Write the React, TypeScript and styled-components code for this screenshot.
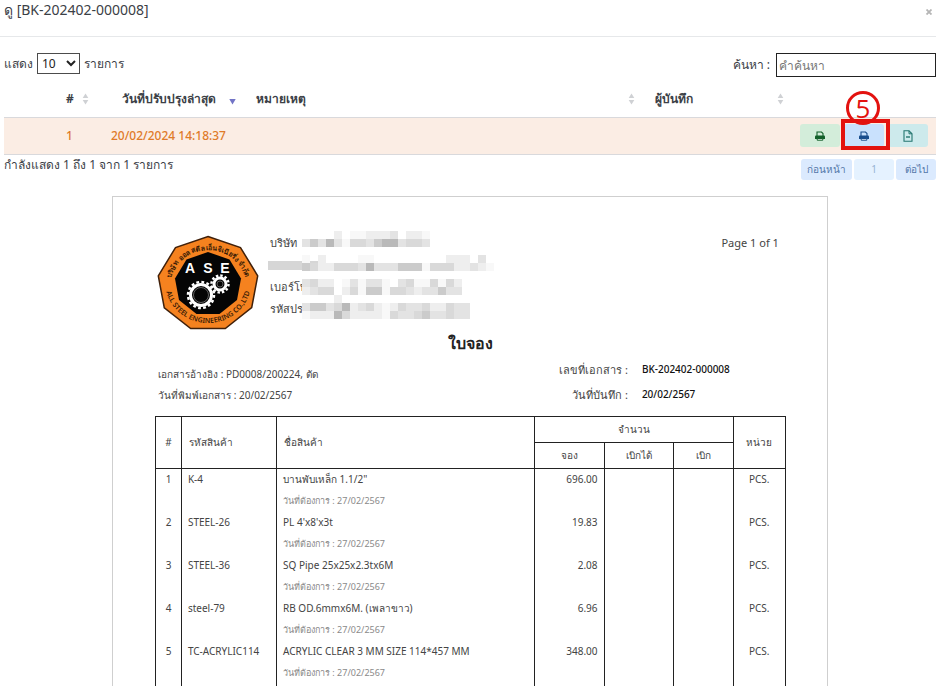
import React from 'react';
import styled, { createGlobalStyle, css } from 'styled-components';

const GlobalStyle = createGlobalStyle`
  *, *::before, *::after { box-sizing: border-box; }
  body {
    margin: 0;
    background: #fff;
    color: #3b4046;
    font: 12px/18px 'Noto Sans', sans-serif;
  }
  button, input, select { font: inherit; color: inherit; }
`;

const Page = styled.main`
  height: 100vh;
  overflow: hidden;
`;

/* ---------- dialog header ---------- */

const DialogHeader = styled.header`
  display: flex;
  justify-content: space-between;
  align-items: flex-start;
  height: 37px;
  padding-left: 4px;
  border-bottom: 1px solid #e6e8ea;
`;

const DialogTitle = styled.h1`
  margin: 0;
  font-size: 14px;
  font-weight: 400;
  line-height: 20px;
`;

const CloseButton = styled.button`
  display: flex;
  padding: 9px 4px;
  border: 0;
  background: none;
`;

/* ---------- list controls ---------- */

const DialogBody = styled.section`
  padding: 16px 0 0 4px;
`;

const Controls = styled.div`
  display: flex;
  justify-content: space-between;
  align-items: flex-start;
  height: 29px;
`;

const LengthLabel = styled.label`
  display: flex;
  align-items: center;
  gap: 4px;
  height: 21px;
`;

const LengthSelect = styled.select`
  width: 43px;
  height: 21px;
  padding: 0;
  border: 1px solid #4c4c4c;
  border-radius: 0;
  background: #fff;
  color: #222;
`;

const SearchLabel = styled.label`
  display: flex;
  align-items: center;
  gap: 6px;
`;

const SearchInput = styled.input`
  width: 160px;
  height: 24px;
  padding: 0 2px;
  border: 1px solid #222;
  border-radius: 0;
  &::placeholder { color: #777; opacity: 1; }
`;

/* ---------- revision list ---------- */

const ListTable = styled.table`
  width: 100%;
  border-collapse: collapse;
  table-layout: fixed;
`;

const Col = styled.col<{ $w?: string }>`
  width: ${(p) => p.$w ?? 'auto'};
`;

const ListHead = styled.th`
  height: 35px;
  padding: 0 10px;
  border-bottom: 1px solid #d9d9dc;
  font-weight: 700;
  text-align: left;
`;

const HeadContent = styled.div<{ $center?: boolean }>`
  display: flex;
  align-items: center;
  justify-content: space-between;
  & > span { flex: 1; text-align: ${(p) => (p.$center ? 'center' : 'left')}; }
`;

const ListCell = styled.td`
  height: 37px;
  padding: 0 18px 0 10px;
  border-bottom: 1px solid #d9d9dc;
  background: #fbede4;
  color: #df7b29;
  font-weight: 500;
  text-align: center;
`;

const ActionCell = styled(ListCell)`
  padding: 0 8px 0 0;
`;

const Actions = styled.div`
  display: flex;
  justify-content: flex-end;
  gap: 4px;
`;

const ActionSlot = styled.div`
  position: relative;
`;

const tones = {
  green: css`background: #d3edda; color: #13602a;`,
  blue: css`background: #c9e1fd; color: #174c8c;`,
  teal: css`background: #cdeaec; color: #24766f;`,
};

const ActionButton = styled.button<{ $tone: keyof typeof tones }>`
  display: flex;
  align-items: center;
  justify-content: center;
  width: 40px;
  height: 23px;
  padding: 0;
  border: 0;
  border-radius: 3px;
  ${(p) => tones[p.$tone]}
`;

const StepNumber = styled.div`
  position: absolute;
  left: 2px;
  bottom: 22px;
  display: flex;
  align-items: center;
  justify-content: center;
  width: 34px;
  height: 34px;
  border: 3px solid #e3120f;
  border-radius: 50%;
  color: #e3120f;
  font: 26px/28px 'Open Sans', sans-serif;
`;

const StepFrame = styled.div`
  position: absolute;
  inset: -5px -6px -3px -3px;
  border: 4px solid #e3120f;
  pointer-events: none;
`;

const ListFooter = styled.div`
  display: flex;
  justify-content: space-between;
  align-items: flex-start;
  height: 41px;
  line-height: 20px;
`;

const Pager = styled.nav`
  display: flex;
  gap: 2px;
  padding-top: 4px;
`;

const PageButton = styled.button<{ $current?: boolean }>`
  min-width: 40px;
  height: 21px;
  padding: 0 6px;
  border: 0;
  border-radius: 3px;
  background: ${(p) => (p.$current ? '#e5f2ff' : '#dbeafe')};
  color: ${(p) => (p.$current ? '#95b3d3' : '#5377a8')};
  font-size: 10px;
`;

/* ---------- printed document ---------- */

const Paper = styled.article`
  width: 76.8%;
  min-width: 640px;
  margin: 0 auto;
  padding: 34px 41px 0 42px;
  border: 1px solid #cfcfcf;
  color: #444;
  font-size: 10px;
`;

const Letterhead = styled.div`
  display: flex;
  align-items: flex-start;
  gap: 11px;
  height: 100px;
  padding: 0 7px 0 2px;
`;

const LogoSlot = styled.div`
  padding-top: 4px;
`;

const Company = styled.div`
  position: relative;
  flex: 1;
  font-size: 11px;
  line-height: 23px;
`;

const CompanyLine = styled.div`
  height: 22px;
`;

const Redaction = styled.svg`
  position: absolute;
  left: -2px;
  top: 0;
`;

const PageCount = styled.div`
  font-size: 11px;
  line-height: 23px;
`;

const DocTitle = styled.h2`
  margin: 0;
  color: #222;
  font-size: 16px;
  font-weight: 600;
  line-height: 24px;
  text-align: center;
`;

const References = styled.div`
  display: flex;
  justify-content: space-between;
  height: 61px;
  padding: 2px 0 0 3px;
`;

const SourceLines = styled.div`
  padding-top: 7px;
  line-height: 21px;
`;

const Facts = styled.dl`
  display: grid;
  grid-template-columns: 100px 144px;
  column-gap: 14px;
  align-content: start;
  margin: 0;
  line-height: 25px;
  & > dt { font-size: 11px; text-align: right; }
  & > dd { margin: 0; color: #111; font-weight: 500; }
`;

const ItemTable = styled.table`
  width: 100%;
  border: 1px solid #222;
  border-collapse: collapse;
  table-layout: fixed;
`;

const ItemHead = styled.th<{ $left?: boolean }>`
  height: 26px;
  padding: 0 7px;
  border: 1px solid #222;
  font-weight: 400;
  line-height: 20px;
  text-align: ${(p) => (p.$left ? 'left' : 'center')};
`;

const ItemCell = styled.td<{ $align?: 'left' | 'right' | 'center' }>`
  height: 43px;
  padding: 0 6px;
  border: solid #222;
  border-width: 0 1px;
  line-height: 20px;
  text-align: ${(p) => p.$align ?? 'left'};
  vertical-align: top;
  white-space: nowrap;
`;

const NeededBy = styled.div`
  color: #8a8a8a;
  font-size: 9px;
  line-height: 23px;
`;

/* ---------- drawings ---------- */

function SortMark({ active = false }: { active?: boolean }) {
  return (
    <svg width="7" height="12" viewBox="0 0 7 12" aria-hidden="true">
      {!active && <path d="M3.5 0.5 6.3 5H.7Z" fill="#cfd1d4" />}
      {active ? <path d="M.3 6h6.400L3.500 11.500Z" fill="#7274c6" /> : <path d="M.7 7h5.600L3.500 11.500Z" fill="#cfd1d4" />}
    </svg>
  );
}

function PrintIcon() {
  return (
    <svg width="10" height="10" viewBox="0 0 10 10" aria-hidden="true">
      <path d="M2 5V1h4.500L8 2.500V5" fill="none" stroke="currentColor" strokeWidth="1.100" />
      <path d="M0 5.500Q0 4.500 1 4.500h8q1 0 1 1V8H0Z" fill="currentColor" />
      <path d="M2.200 7.500h5.600v1.700H2.200Z" fill="#fff" fillOpacity=".85" stroke="currentColor" strokeWidth="1" />
    </svg>
  );
}

function FileIcon() {
  return (
    <svg width="10" height="12" viewBox="0 0 10 12" fill="none" stroke="currentColor" aria-hidden="true">
      <path d="M1 .8h5L9 3.800v7.400H1Z" strokeWidth="1.100" />
      <path d="M6 .8v3h3" strokeWidth="1" />
      <path d="M3 7h4" strokeWidth="1.400" />
    </svg>
  );
}

const LOGO_X = 51;
const LOGO_Y = 49;

function nonagon(rx: number, ry: number) {
  return Array.from({ length: 9 }, (_, i) => {
    const a = (i * 2 * Math.PI) / 9;
    return `${(LOGO_X + rx * Math.sin(a)).toFixed(1)},${(LOGO_Y - ry * Math.cos(a)).toFixed(1)}`;
  }).join(' ');
}

function Gear({ x, y, r, teeth }: { x: number; y: number; r: number; teeth: number }) {
  const pitch = (2 * Math.PI * r) / teeth;
  return (
    <g fill="none" stroke="#fff">
      <circle cx={x} cy={y} r={r} strokeWidth="2.500" strokeDasharray={`${pitch * 0.55} ${pitch * 0.45}`} />
      <circle cx={x} cy={y} r={r - 2.5} strokeWidth="3" />
      <circle cx={x} cy={y} r={r - 5.5} stroke="#777" strokeWidth="0.800" />
    </g>
  );
}

function Logo() {
  return (
    <svg width="102" height="98" viewBox="0 0 102 98" role="img" aria-label="ASE">
      <polygon points={nonagon(50.5, 47.5)} fill="#f5821f" stroke="#40200a" strokeWidth="1.500" />
      <polygon points={nonagon(33.5, 32)} fill="#050505" />
      <g fill="#fff" fontFamily="Liberation Sans, sans-serif" fontSize="14" fontWeight="700" textAnchor="middle">
        <text x="33" y="38">A</text>
        <text x="51" y="38">S</text>
        <text x="68" y="38">E</text>
      </g>
      <Gear x={44} y={60} r={13} teeth={16} />
      <Gear x={63} y={49} r={8.5} teeth={12} />
      <path id="arc-top" d="M13 51A38 36 0 0 1 89 51" fill="none" />
      <path id="arc-bottom" d="M8 47A43 41 0 0 0 94 47" fill="none" />
      <g fill="#3a1c06" fontFamily="Noto Sans, sans-serif" fontSize="7" fontWeight="600" textAnchor="middle">
        <text>
          <textPath href="#arc-top" startOffset="50%">บริษัท ออล สตีล เอ็นจิเนียริ่ง จำกัด</textPath>
        </text>
        <text>
          <textPath href="#arc-bottom" startOffset="50%">ALL STEEL ENGINEERING CO.,LTD</textPath>
        </text>
      </g>
    </svg>
  );
}

const SHADES = ['', '#f8f8f8', '#eeeeee', '#e3e3e3', '#d9d9d9', '#cbcbcb', '#b9b9b9'];
const MASK = [
  '000020112223022100000000',
  '353631443566344300000000',
  '000000000000000000000000',
  '102000011000000000222030',
  '542244436333555144422321',
  '000000000000000000000000',
  '342201313310341141420000',
  '234402415514432335330000',
  '000020000000000000000000',
  '355346234212433422433000',
  '122264222214334533433000',
];

function CompanyMask() {
  return (
    <Redaction width="228" height="90" viewBox="0 0 228 90" aria-hidden="true" shapeRendering="crispEdges">
      <rect x="0" y="30" width="50" height="9" fill="#d6d6d6" />
      {MASK.flatMap((row, y) =>
        [...row].map((level, x) =>
          level === '0' ? null : (
            <rect key={`${x}-${y}`} x={34 + x * 8} y={y * 8} width="8" height="8" fill={SHADES[Number(level)]} />
          ),
        ),
      )}
    </Redaction>
  );
}

/* ---------- data ---------- */

const items = [
  { code: 'K-4', name: 'บานพับเหล็ก 1.1/2"', qty: '696.00' },
  { code: 'STEEL-26', name: "PL 4'x8'x3t", qty: '19.83' },
  { code: 'STEEL-36', name: 'SQ Pipe 25x25x2.3tx6M', qty: '2.08' },
  { code: 'steel-79', name: 'RB OD.6mmx6M. (เพลาขาว)', qty: '6.96' },
  { code: 'TC-ACRYLIC114', name: 'ACRYLIC CLEAR 3 MM SIZE 114*457 MM', qty: '348.00' },
];

export default function App() {
  return (
    <>
      <GlobalStyle />
      <Page>
        <DialogHeader>
          <DialogTitle>ดู [BK-202402-000008]</DialogTitle>
          <CloseButton type="button" aria-label="ปิด">
            <svg width="6" height="6" viewBox="0 0 6 6" stroke="#b5b5b5" strokeWidth="1.800" aria-hidden="true">
              <path d="M.5.5l5 5M5.500.5l-5 5" />
            </svg>
          </CloseButton>
        </DialogHeader>

        <DialogBody>
          <Controls>
            <LengthLabel>
              แสดง
              <LengthSelect defaultValue="10">
                <option>10</option>
                <option>25</option>
                <option>50</option>
              </LengthSelect>
              รายการ
            </LengthLabel>
            <SearchLabel>
              ค้นหา :
              <SearchInput type="search" placeholder="คำค้นหา" />
            </SearchLabel>
          </Controls>

          <ListTable>
            <colgroup>
              <Col $w="44px" />
              <Col $w="51px" />
              <Col $w="147px" />
              <Col />
              <Col $w="149px" />
              <Col $w="142px" />
            </colgroup>
            <thead>
              <tr>
                <ListHead />
                <ListHead>
                  <HeadContent $center><span>#</span><SortMark /></HeadContent>
                </ListHead>
                <ListHead>
                  <HeadContent $center><span>วันที่ปรับปรุงล่าสุด</span><SortMark active /></HeadContent>
                </ListHead>
                <ListHead>
                  <HeadContent><span>หมายเหตุ</span><SortMark /></HeadContent>
                </ListHead>
                <ListHead>
                  <HeadContent><span>ผู้บันทึก</span><SortMark /></HeadContent>
                </ListHead>
                <ListHead />
              </tr>
            </thead>
            <tbody>
              <tr>
                <ListCell />
                <ListCell>1</ListCell>
                <ListCell>20/02/2024 14:18:37</ListCell>
                <ListCell />
                <ListCell />
                <ActionCell>
                  <Actions>
                    <ActionButton type="button" $tone="green" aria-label="พิมพ์"><PrintIcon /></ActionButton>
                    <ActionSlot>
                      <ActionButton type="button" $tone="blue" aria-label="พิมพ์ใบจอง"><PrintIcon /></ActionButton>
                      <StepNumber>5</StepNumber>
                      <StepFrame />
                    </ActionSlot>
                    <ActionButton type="button" $tone="teal" aria-label="เอกสาร"><FileIcon /></ActionButton>
                  </Actions>
                </ActionCell>
              </tr>
            </tbody>
          </ListTable>

          <ListFooter>
            <span>กำลังแสดง 1 ถึง 1 จาก 1 รายการ</span>
            <Pager>
              <PageButton type="button">ก่อนหน้า</PageButton>
              <PageButton type="button" $current>1</PageButton>
              <PageButton type="button">ต่อไป</PageButton>
            </Pager>
          </ListFooter>

          <Paper>
            <Letterhead>
              <LogoSlot><Logo /></LogoSlot>
              <Company>
                <CompanyLine>บริษัท</CompanyLine>
                <CompanyLine />
                <CompanyLine>เบอร์โท</CompanyLine>
                <CompanyLine>รหัสปร</CompanyLine>
                <CompanyMask />
              </Company>
              <PageCount>Page 1 of 1</PageCount>
            </Letterhead>
            <DocTitle>ใบจอง</DocTitle>
            <References>
              <SourceLines>
                <div>เอกสารอ้างอิง : PD0008/200224, ตัด</div>
                <div>วันที่พิมพ์เอกสาร : 20/02/2567</div>
              </SourceLines>
              <Facts>
                <dt>เลขที่เอกสาร :</dt>
                <dd>BK-202402-000008</dd>
                <dt>วันที่บันทึก :</dt>
                <dd>20/02/2567</dd>
              </Facts>
            </References>

            <ItemTable>
              <colgroup>
                <Col $w="4.1%" />
                <Col $w="15.1%" />
                <Col $w="41%" />
                <Col $w="11%" />
                <Col $w="11%" />
                <Col $w="9.5%" />
                <Col $w="8.3%" />
              </colgroup>
              <thead>
                <tr>
                  <ItemHead rowSpan={2}>#</ItemHead>
                  <ItemHead rowSpan={2} $left>รหัสสินค้า</ItemHead>
                  <ItemHead rowSpan={2} $left>ชื่อสินค้า</ItemHead>
                  <ItemHead colSpan={3}>จำนวน</ItemHead>
                  <ItemHead rowSpan={2}>หน่วย</ItemHead>
                </tr>
                <tr>
                  <ItemHead>จอง</ItemHead>
                  <ItemHead>เบิกได้</ItemHead>
                  <ItemHead>เบิก</ItemHead>
                </tr>
              </thead>
              <tbody>
                {items.map((item, i) => (
                  <tr key={item.code}>
                    <ItemCell $align="center">{i + 1}</ItemCell>
                    <ItemCell>{item.code}</ItemCell>
                    <ItemCell>
                      {item.name}
                      <NeededBy>วันที่ต้องการ : 27/02/2567</NeededBy>
                    </ItemCell>
                    <ItemCell $align="right">{item.qty}</ItemCell>
                    <ItemCell />
                    <ItemCell />
                    <ItemCell $align="center">PCS.</ItemCell>
                  </tr>
                ))}
                <tr>
                  {Array.from({ length: 7 }, (_, i) => <ItemCell key={i} />)}
                </tr>
              </tbody>
            </ItemTable>
          </Paper>
        </DialogBody>
      </Page>
    </>
  );
}
